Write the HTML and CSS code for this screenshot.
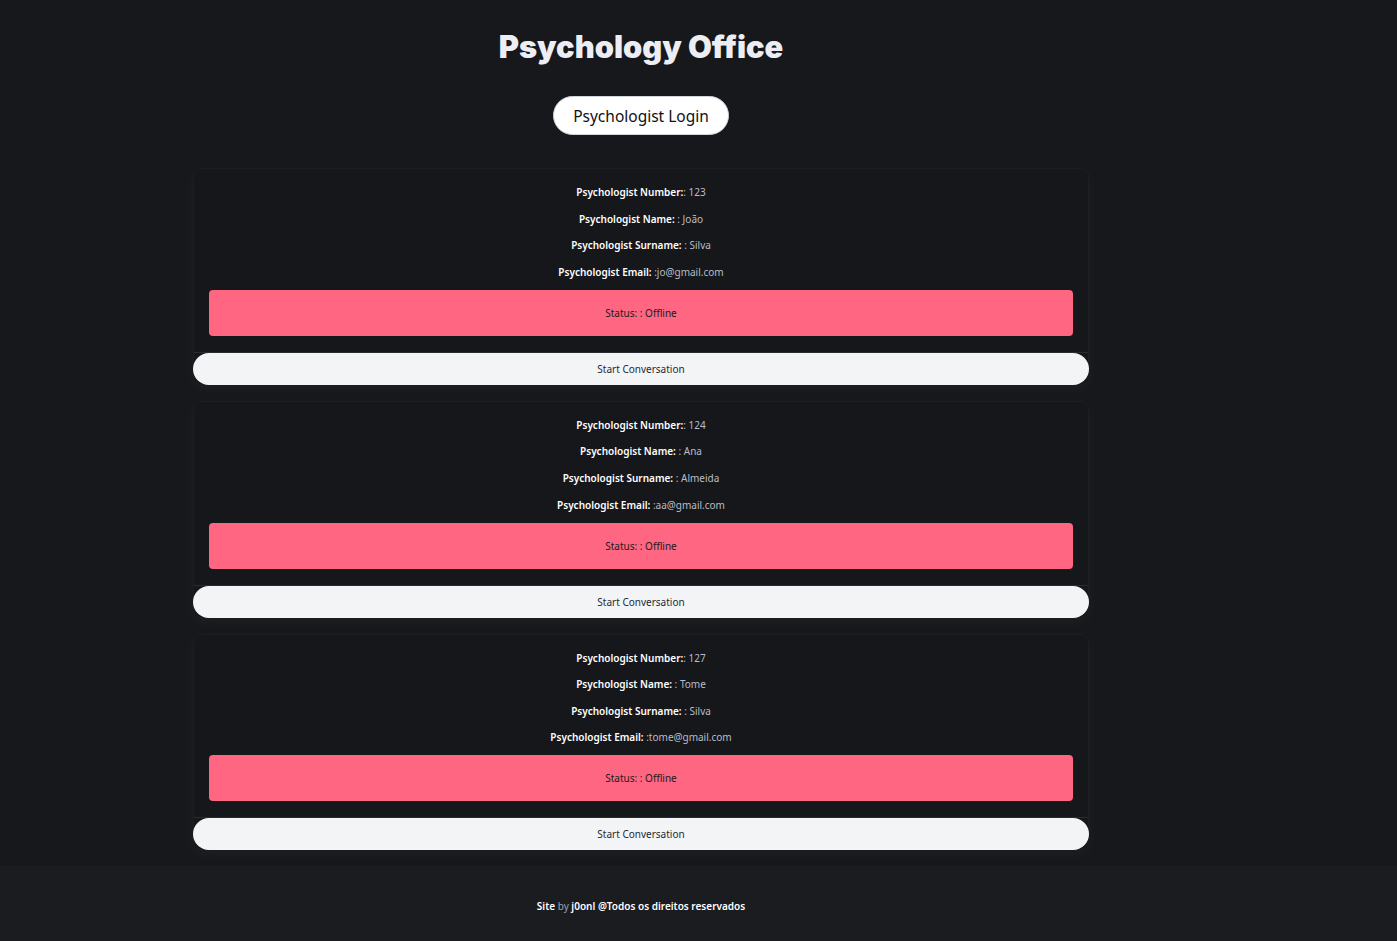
FILE: index.html
```html
<!DOCTYPE html>
<html lang="en">
<head>
<meta charset="utf-8">
<title>Psychology Office</title>
<link rel="stylesheet" href="styles.css">
</head>
<body>
<div class="page">
  <main class="main">
    <h1 class="title">Psychology Office</h1>
    <button class="login">Psychologist Login</button>
    <div class="list">
      <div class="card">
        <div class="info">
          <p><b>Psychologist Number:</b>: 123</p>
          <p><b>Psychologist Name:</b> : João</p>
          <p><b>Psychologist Surname:</b> : Silva</p>
          <p><b>Psychologist Email:</b> :jo@gmail.com</p>
          <div class="status">Status: : Offline</div>
        </div>
        <button class="start">Start Conversation</button>
      </div>
      <div class="card">
        <div class="info">
          <p><b>Psychologist Number:</b>: 124</p>
          <p><b>Psychologist Name:</b> : Ana</p>
          <p><b>Psychologist Surname:</b> : Almeida</p>
          <p><b>Psychologist Email:</b> :aa@gmail.com</p>
          <div class="status">Status: : Offline</div>
        </div>
        <button class="start">Start Conversation</button>
      </div>
      <div class="card">
        <div class="info">
          <p><b>Psychologist Number:</b>: 127</p>
          <p><b>Psychologist Name:</b> : Tome</p>
          <p><b>Psychologist Surname:</b> : Silva</p>
          <p><b>Psychologist Email:</b> :tome@gmail.com</p>
          <div class="status">Status: : Offline</div>
        </div>
        <button class="start">Start Conversation</button>
      </div>
    </div>
  </main>
  <footer class="footer">
    <p><span class="strong">Site</span> <span class="muted">by</span> <span class="strong">j0onl @Todos os direitos reservados</span></p>
  </footer>
</div>
</body>
</html>
```

FILE: styles.css
```css
* { box-sizing: border-box; }
html, body { margin: 0; padding: 0; }
body {
  background: #17181c;
  font-family: "Noto Sans", "Open Sans", sans-serif;
  color: #e5e7eb;
  min-height: 941px;
}
.page {
  display: flex;
  flex-direction: column;
  min-height: 941px;
}
.main {
  width: 1282px;
  display: flex;
  flex-direction: column;
  align-items: center;
  padding-top: 24px;
  padding-bottom: 16px;
}
.title {
  margin: 0;
  font-family: Inter, Lato, sans-serif;
  font-weight: 900;
  font-size: 30.8px;
  line-height: 46px;
  color: #eceef4;
}
.login {
  margin-top: 26px;
  height: 39px;
  padding: 0 19px;
  border-radius: 20px;
  border: 1px solid #d1d5db;
  background: #ffffff;
  color: #111111;
  font-family: "Noto Sans", sans-serif;
  font-size: 15.5px;
}
.list {
  margin-top: 33px;
  width: 896px;
  display: flex;
  flex-direction: column;
  gap: 16px;
}
.card {
  background: #16171b;
  border: 1px solid #1c1e22;
  border-radius: 8px;
  box-shadow: 0 4px 14px rgba(255, 255, 255, 0.035);
  display: flex;
  flex-direction: column;
}
.info {
  padding: 15px 15px 16px;
  display: flex;
  flex-direction: column;
  align-items: center;
  border-bottom: 1px solid #2a2c31;
}
.info p {
  margin: 0 0 10.6px;
  font-size: 10px;
  line-height: 16px;
  color: #b9bdc6;
}
.info p b {
  color: #ffffff;
  font-weight: 600;
}
.info p:nth-of-type(4) { margin-bottom: 10px; }
.status {
  align-self: stretch;
  height: 46px;
  background: #ff6682;
  border-radius: 4px;
  display: flex;
  align-items: center;
  justify-content: center;
  font-size: 10px;
  color: #1a1a1a;
}
.start {
  margin: 0 -1px -1px;
  height: 32px;
  border: none;
  border-radius: 16px;
  background: #f3f4f6;
  color: #1f2937;
  font-family: "Noto Sans", sans-serif;
  font-size: 10px;
}
.footer {
  flex: 1;
  background: #1a1c20;
  display: flex;
  justify-content: flex-start;
  width: 100%;
}
.footer p {
  width: 1282px;
  margin: 0;
  padding-top: 32px;
  text-align: center;
  font-size: 10px;
  line-height: 16px;
}
.footer .strong { color: #ffffff; font-weight: 600; }
.footer .muted { color: #9ca3af; }
```
